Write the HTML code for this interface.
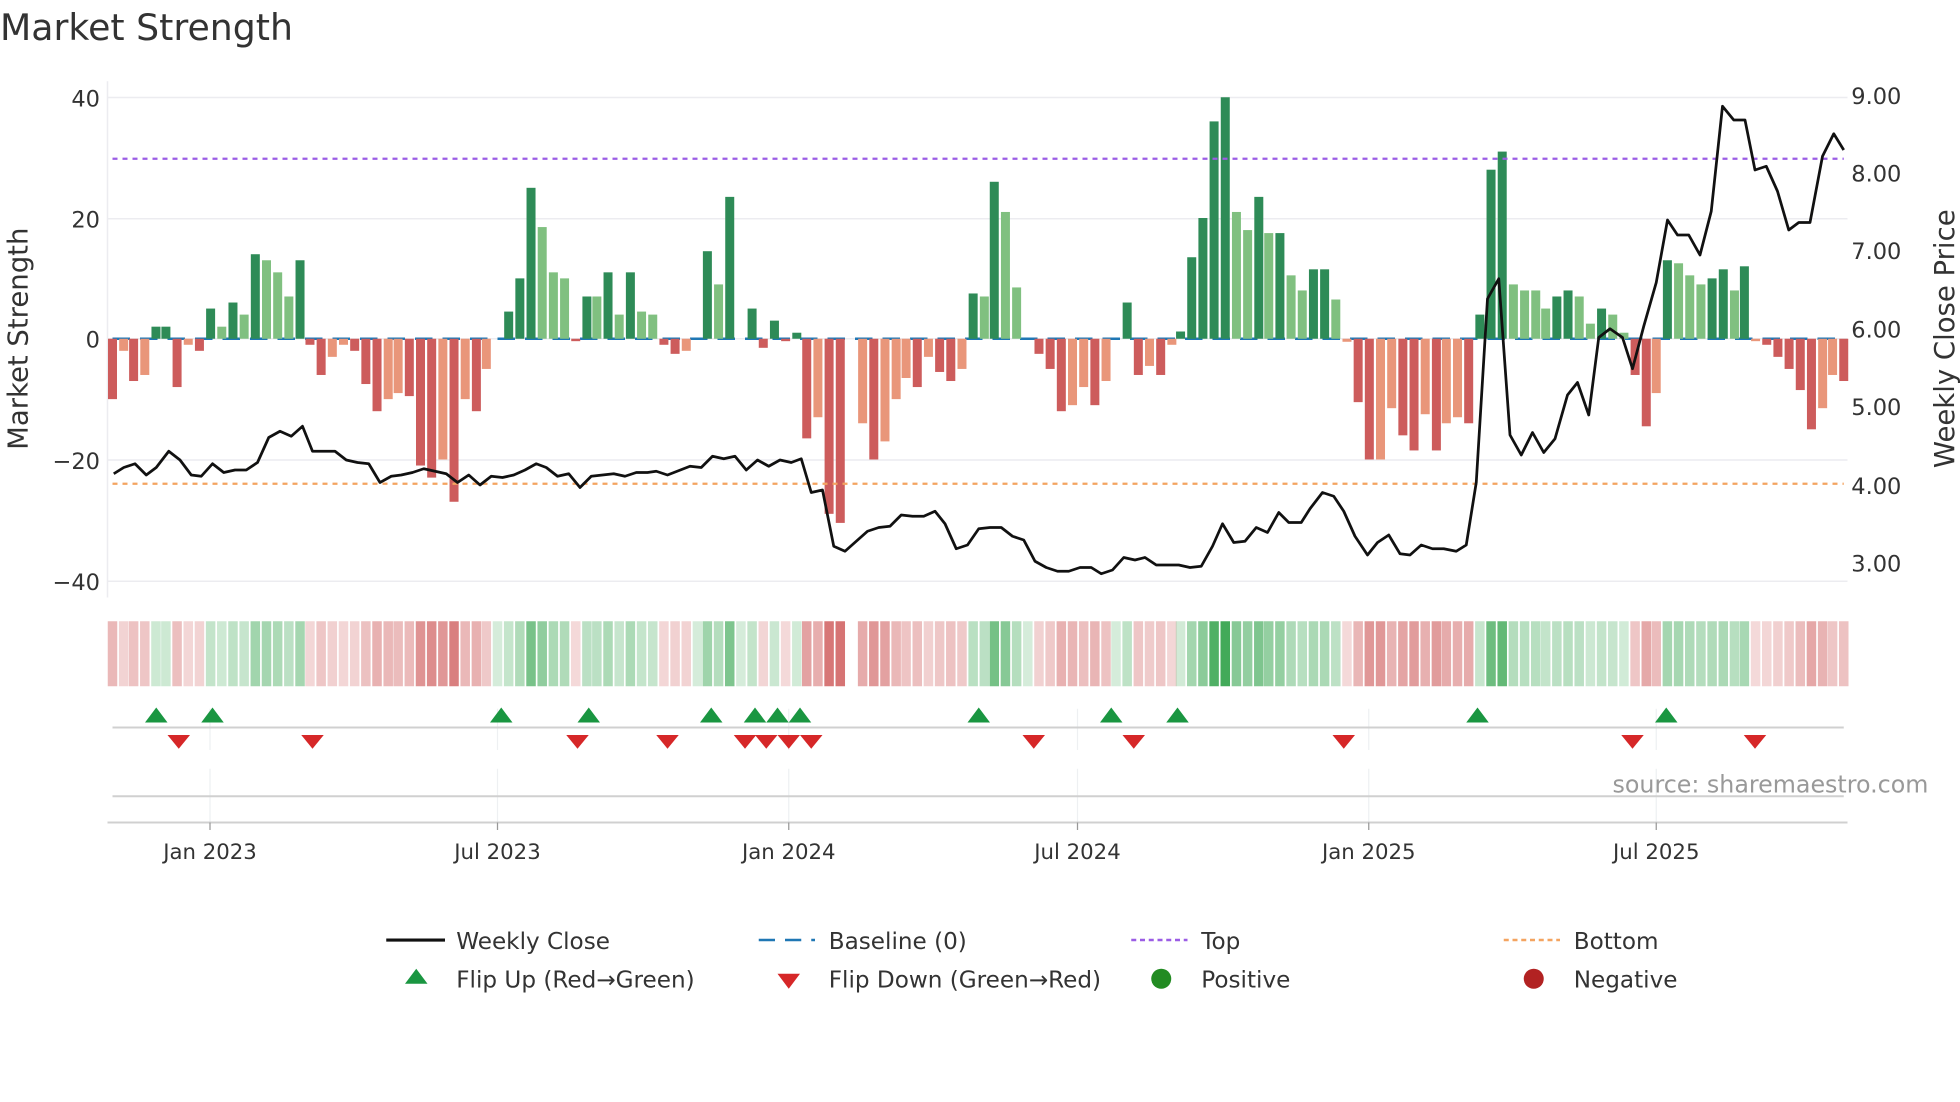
<!DOCTYPE html>
<html><head><meta charset="utf-8"><style>
html,body{margin:0;padding:0;background:#fff;width:1960px;height:1102px;overflow:hidden}
svg{display:block}
text{font-family:"DejaVu Sans","Liberation Sans",sans-serif;fill:#333}
</style></head><body>
<svg id="s" width="1960" height="1102" viewBox="0 0 1568 881.6" xmlns="http://www.w3.org/2000/svg">
<text x="0" y="32" font-size="29">Market Strength</text>
<g stroke="#ececf0" stroke-width="1.2">
<line x1="86" y1="78" x2="1478" y2="78"/><line x1="86" y1="175" x2="1478" y2="175"/>
<line x1="86" y1="271" x2="1478" y2="271"/><line x1="86" y1="368" x2="1478" y2="368"/>
<line x1="86" y1="465" x2="1478" y2="465"/>
<line x1="86" y1="65" x2="86" y2="478"/>
</g>
<g font-size="18" text-anchor="end">
<text x="80" y="85">40</text><text x="80" y="182">20</text><text x="80" y="278">0</text>
<text x="80" y="375">−20</text><text x="80" y="472">−40</text>
</g>
<g font-size="18">
<text x="1481" y="83">9.00</text><text x="1481" y="145">8.00</text><text x="1481" y="207">7.00</text>
<text x="1481" y="270">6.00</text><text x="1481" y="332">5.00</text><text x="1481" y="395">4.00</text>
<text x="1481" y="457">3.00</text>
</g>
<text font-size="22" transform="translate(22,271) rotate(-90)" text-anchor="middle">Market Strength</text>
<text font-size="22" transform="translate(1563,271) rotate(-90)" text-anchor="middle">Weekly Close Price</text>
<line x1="90" y1="271" x2="1475" y2="271" stroke="#1f77b4" stroke-width="2" stroke-dasharray="14 8"/>
<g id="bars"></g>
<line x1="90" y1="127" x2="1475" y2="127" stroke="#9b5de5" stroke-width="1.8" stroke-dasharray="4 4"/>
<line x1="90" y1="387" x2="1475" y2="387" stroke="#f4a460" stroke-width="1.8" stroke-dasharray="4 4"/>
<polyline id="pl" fill="none" stroke="#111" stroke-width="2.2" stroke-linejoin="round"/>
<g id="heat"></g>
<g stroke="#eef0f2" stroke-width="1">
<line x1="168" y1="567" x2="168" y2="600"/><line x1="398" y1="567" x2="398" y2="600"/><line x1="631" y1="567" x2="631" y2="600"/><line x1="862" y1="567" x2="862" y2="600"/><line x1="1095" y1="567" x2="1095" y2="600"/><line x1="1325" y1="567" x2="1325" y2="600"/>
<line x1="168" y1="615" x2="168" y2="658"/><line x1="398" y1="615" x2="398" y2="658"/><line x1="631" y1="615" x2="631" y2="658"/><line x1="862" y1="615" x2="862" y2="658"/><line x1="1095" y1="615" x2="1095" y2="658"/><line x1="1325" y1="615" x2="1325" y2="658"/>
</g>
<line x1="90" y1="582" x2="1475" y2="582" stroke="#d0d0d0" stroke-width="1.6"/>
<line x1="90" y1="637" x2="1475" y2="637" stroke="#d0d0d0" stroke-width="1.6"/>
<line x1="86" y1="658" x2="1478" y2="658" stroke="#d0d0d0" stroke-width="1.6"/>
<g stroke="#999" stroke-width="1"><line x1="168" y1="658" x2="168" y2="664"/><line x1="398" y1="658" x2="398" y2="664"/><line x1="631" y1="658" x2="631" y2="664"/><line x1="862" y1="658" x2="862" y2="664"/><line x1="1095" y1="658" x2="1095" y2="664"/><line x1="1325" y1="658" x2="1325" y2="664"/></g>
<g id="mk"></g>
<text x="1290" y="634" font-size="19" fill="#999" style="fill:#999">source: sharemaestro.com</text>
<g font-size="17" text-anchor="middle">
<text x="168" y="687">Jan 2023</text><text x="398" y="687">Jul 2023</text><text x="631" y="687">Jan 2024</text>
<text x="862" y="687">Jul 2024</text><text x="1095" y="687">Jan 2025</text><text x="1325" y="687">Jul 2025</text>
</g>
<g font-size="18.5">
<line x1="309" y1="752" x2="356" y2="752" stroke="#111" stroke-width="2.5"/><text x="365" y="759">Weekly Close</text>
<line x1="607" y1="752" x2="652" y2="752" stroke="#1f77b4" stroke-width="2" stroke-dasharray="13 8"/><text x="663" y="759">Baseline (0)</text>
<line x1="905" y1="752" x2="950" y2="752" stroke="#9b5de5" stroke-width="2" stroke-dasharray="4 3"/><text x="961" y="759">Top</text>
<line x1="1203" y1="752" x2="1248" y2="752" stroke="#f4a460" stroke-width="2" stroke-dasharray="4 3"/><text x="1259" y="759">Bottom</text>
<polygon points="333,775 342,787 324,787" fill="#1a9641"/><text x="365" y="790">Flip Up (Red→Green)</text>
<polygon points="622,779 640,779 631,791" fill="#d62728"/><text x="663" y="790">Flip Down (Green→Red)</text>
<circle cx="929" cy="783" r="8" fill="#228b22"/><text x="961" y="790">Positive</text>
<circle cx="1227" cy="783" r="8" fill="#b22222"/><text x="1259" y="790">Negative</text>
</g>
</svg>
<script>
var NS="http://www.w3.org/2000/svg";
function el(t,a,p){var e=document.createElementNS(NS,t);for(var k in a)e.setAttribute(k,a[k]);p.appendChild(e);return e;}
var B="90,-10,R 99,-2,r 107,-7,R 116,-6,r 125,2,G 133,2,G 142,-8,R 151,-1,r 160,-2,R 169,5,G 178,2,g 187,6,G 196,4,g 205,14,G 214,13,g 223,11,g 232,7,g 241,13,G 249,-1,R 258,-6,R 267,-3,r 276,-1,r 285,-2,R 294,-7.5,R 303,-12,R 312,-10,r 320,-9,r 329,-9.5,R 338,-21,R 347,-23,R 356,-20,r 365,-27,R 374,-10,r 383,-12,R 391,-5,r 400,0,g 409,4.5,G 418,10,G 427,25,G 436,18.5,g 445,11,g 454,10,g 463,-0.4,R 472,7,G 480,7,g 489,11,G 498,4,g 507,11,G 516,4.5,g 525,4,g 534,-1,R 543,-2.5,R 552,-2,r 561,0,g 569,14.5,G 578,9,g 587,23.5,G 596,0,g 605,5,G 614,-1.5,R 623,3,G 632,-0.4,R 641,1,G 649,-16.5,R 658,-13,r 667,-29,R 676,-30.5,R 694,-14,r 703,-20,R 712,-17,r 721,-10,r 729,-6.5,r 738,-8,R 747,-3,r 756,-5.5,R 765,-7,R 774,-5,r 783,7.5,G 792,7,g 800,26,G 809,21,g 818,8.5,g 827,0,g 836,-2.5,R 845,-5,R 854,-12,R 863,-11,r 872,-8,r 881,-11,R 890,-7,r 898,0,g 907,6,G 916,-6,R 925,-4.5,r 934,-6,R 943,-1,r 950,1.2,G 959,13.5,G 968,20,G 977,36,G 986,40,G 995,21,g 1004,18,g 1013,23.5,G 1021,17.5,g 1030,17.5,G 1039,10.5,g 1048,8,g 1057,11.5,G 1066,11.5,G 1075,6.5,g 1084,-0.5,r 1093,-10.5,R 1102,-20,R 1111,-20,r 1120,-11.5,r 1129,-16,R 1138,-18.5,R 1147,-12.5,r 1156,-18.5,R 1164,-14,r 1173,-13,r 1182,-14,R 1191,4,G 1200,28,G 1209,31,G 1218,9,g 1227,8,g 1236,8,g 1244,5,g 1253,7,G 1262,8,G 1271,7,g 1280,2.5,g 1289,5,G 1298,4,g 1307,1,g 1316,-6,R 1325,-14.5,R 1333,-9,r 1342,13,G 1351,12.5,g 1360,10.5,g 1369,9,g 1378,10,G 1387,11.5,G 1396,8,g 1404,12,G 1413,-0.4,r 1422,-1,R 1431,-3,R 1440,-5,R 1449,-8.5,R 1458,-15,R 1467,-11.5,r 1475,-6,r 1484,-7,R".split(" ");
var col={G:"#2e8b57",g:"#80c080",R:"#cd5c5c",r:"#e9967a"};
var bars=document.getElementById("bars"),heat=document.getElementById("heat");
B.forEach(function(s,i){var p=s.split(",");var x=90+(+p[0]-90)*0.99354,v=+p[1],c=p[2];
 var h=v*4.83;
 if(Math.abs(h)>0.3) el("rect",{x:x-3.6,y:h>0?271-h:271,width:7.2,height:Math.abs(h),fill:col[c]},bars);
 var f=(v>=0)?"rgba(44,160,70,"+(0.2+0.7*Math.min(1,Math.abs(v)/40))+")":"rgba(200,70,70,"+(0.2+0.55*Math.min(1,Math.abs(v)/30))+")";
 el("rect",{x:x-3.8,y:497,width:7.6,height:52,fill:f},heat);
});
var P="91,379 99,374 108,371 117,380 125,374 135,361 144,368 153,380 161,381 170,371 179,378 188,376 197,376 206,370 215,350 224,345 233,349 242,341 250,361 259,361 268,361 277,368 286,370 295,371 304,386 313,381 321,380 330,378 339,375 348,377 357,379 366,386 375,380 384,388 393,381 402,382 411,380 420,376 429,371 437,374 446,381 455,379 464,390 473,381 482,380 491,379 500,381 509,378 518,378 525,377 534,380 552,373 561,374 570,365 579,367 588,365 597,376 606,368 615,373 624,368 633,370 641,367 649,394 658,392 667,437 676,441 685,433 694,425 703,422 712,421 721,412 730,413 739,413 748,409 756,419 765,439 774,436 783,423 792,422 801,422 810,429 819,432 828,449 837,454 846,457 855,457 864,454 873,454 881,459 890,456 899,446 908,448 916,446 925,452 934,452 943,452 952,454 961,453 970,437 978,419 987,434 996,433 1005,422 1014,426 1023,410 1031,418 1041,418 1048,407 1058,394 1067,397 1075,409 1084,429 1094,444 1102,434 1111,428 1120,443 1128,444 1137,436 1146,439 1155,439 1165,441 1173,436 1181,386 1190,239 1199,223 1208,348 1217,364 1226,346 1235,362 1244,351 1254,316 1262,306 1271,332 1279,270 1288,263 1298,270 1306,295 1315,261 1325,226 1334,176 1342,188 1351,188 1360,204 1369,169 1378,85 1387,96 1396,96 1404,136 1413,133 1422,153 1431,184 1439,178 1448,178 1458,125 1467,107 1475,120";
document.getElementById("pl").setAttribute("points",P);
var mk=document.getElementById("mk");
[125,170,401,471,569,604,622,640,783,889,942,1182,1333].forEach(function(x){el("polygon",{points:(x)+",566 "+(x+9)+",578 "+(x-9)+",578",fill:"#1a9641"},mk);});
[143,250,462,534,596,613,631,649,827,907,1075,1306,1404].forEach(function(x){el("polygon",{points:(x-9)+",588 "+(x+9)+",588 "+x+",599",fill:"#d62728"},mk);});
</script>
</body></html>
